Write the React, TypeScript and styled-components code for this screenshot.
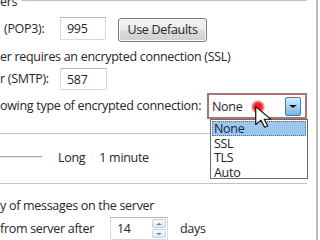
import styled, { createGlobalStyle } from 'styled-components';

const GlobalStyle = createGlobalStyle`
  html, body {
    margin: 0;
    padding: 0;
    background: #ffffff;
    overflow: hidden;
  }
`;

const Frame = styled.div`
  position: relative;
  width: 320px;
  height: 240px;
  overflow: hidden;
  background: #ffffff;
  font-family: 'Open Sans', 'Noto Sans', sans-serif;
  font-size: 12.5px;
  letter-spacing: -0.3px;
  color: #262626;
`;

const Panel = styled.div`
  display: flex;
  flex-direction: column;
  box-sizing: border-box;
  width: 318px;
  height: 240px;
  padding-right: 9px;
  border-right: 2px solid #bcbcbc;
`;

const GroupHeader = styled.div`
  display: flex;
  align-items: center;
  gap: 4px;
  height: 18px;
  margin-top: -8px;
`;

const Rule = styled.div<{ $width?: number }>`
  flex: ${(p) => (p.$width ? `0 0 ${p.$width}px` : '1')};
  height: 0;
  border-top: 1px solid #c2c2c2;
  border-bottom: 1px solid #fdfdfd;
`;

const Row = styled.div<{ $top: number; $height: number; $indent?: number }>`
  display: flex;
  align-items: center;
  margin-top: ${(p) => p.$top}px;
  height: ${(p) => p.$height}px;
  padding-left: ${(p) => p.$indent ?? 0}px;
  white-space: nowrap;
`;

const Label = styled.span<{ $width?: number }>`
  flex: 0 0 ${(p) => (p.$width ? `${p.$width}px` : 'auto')};
  line-height: 16px;
`;

const Spaced = styled.span<{ $gap: number }>`
  margin-left: ${(p) => p.$gap}px;
  line-height: 16px;
`;

const TextBox = styled.div<{ $width: number; $height: number }>`
  display: flex;
  align-items: center;
  box-sizing: border-box;
  width: ${(p) => p.$width}px;
  height: ${(p) => p.$height}px;
  padding-left: 6px;
  background: #ffffff;
  border: 1px solid #d6dbe1;
  border-top-color: #b3b6bb;
`;

const PushButton = styled.div`
  display: flex;
  align-items: center;
  justify-content: center;
  box-sizing: border-box;
  width: 89px;
  height: 24px;
  margin-left: 12px;
  margin-top: 2px;
  border: 1px solid #7a7a7a;
  border-radius: 3px;
  background: linear-gradient(#f3f3f3 0%, #ebebeb 48%, #dcdcdc 52%, #cfcfcf 100%);
  box-shadow: inset 0 0 0 1px #fafafa;
`;

const Combo = styled.div`
  display: flex;
  align-items: center;
  justify-content: space-between;
  box-sizing: border-box;
  width: 102px;
  height: 26px;
  padding: 0 4px 0 3px;
  background: #ffffff;
  border: 2px solid #a27878;
`;

const DropButton = styled.div`
  display: flex;
  align-items: center;
  justify-content: center;
  box-sizing: border-box;
  width: 16px;
  height: 19px;
  border: 1px solid #3f7db0;
  border-radius: 2px;
  background: linear-gradient(#d6edfc 0%, #a9d4f3 50%, #7ab6e5 100%);
`;

const Triangle = styled.span<{ $up?: boolean; $color: string; $size: number }>`
  width: 0;
  height: 0;
  border-left: ${(p) => p.$size}px solid transparent;
  border-right: ${(p) => p.$size}px solid transparent;
  ${(p) =>
    p.$up
      ? `border-bottom: ${p.$size - 1}px solid ${p.$color};`
      : `border-top: ${p.$size - 1}px solid ${p.$color};`}
`;

const Track = styled.div`
  flex: 0 0 42px;
  height: 0;
  margin-top: -3px;
  border-top: 1px solid #a9a9a9;
  border-bottom: 1px solid #e6e6e6;
`;

const Separator = styled.div<{ $top: number }>`
  margin-top: ${(p) => p.$top}px;
  height: 0;
  border-top: 1px solid #c2c2c2;
  border-bottom: 1px solid #fdfdfd;
`;

const TextLine = styled.div<{ $top: number }>`
  margin-top: ${(p) => p.$top}px;
  height: 16px;
  line-height: 16px;
  white-space: nowrap;
`;

const SpinBox = styled(TextBox)`
  justify-content: space-between;
  padding-right: 1px;
`;

const SpinButtons = styled.div`
  display: flex;
  flex-direction: column;
  gap: 1px;
  align-self: stretch;
  padding: 1px 0;
`;

const SpinButton = styled.div`
  display: flex;
  align-items: center;
  justify-content: center;
  flex: 1;
  width: 14px;
  box-sizing: border-box;
  border: 1px solid #c8d2de;
  border-radius: 2px;
  background: linear-gradient(#f6f8fb, #e2e8ef);
`;

const DropList = styled.div`
  position: absolute;
  left: 210px;
  top: 119px;
  box-sizing: border-box;
  width: 98px;
  height: 60px;
  padding: 1px;
  background: #ffffff;
  border: 1px solid #6a6a6a;
  display: flex;
  flex-direction: column;
`;

const ListItem = styled.div<{ $selected?: boolean }>`
  box-sizing: border-box;
  height: 14.5px;
  line-height: 14px;
  padding-left: 1px;
  color: ${(p) => (p.$selected ? '#14243f' : '#222222')};
  background: ${(p) => (p.$selected ? '#9cc8f0' : 'transparent')};
  border: 1px ${(p) => (p.$selected ? 'dotted #5a6b80' : 'solid transparent')};
`;

const ClickDot = styled.div`
  position: absolute;
  left: 251px;
  top: 100px;
  width: 14px;
  height: 14px;
  border-radius: 50%;
  background: radial-gradient(circle, #ff1a1a 0%, #f0282c 40%, rgba(240, 60, 60, 0.35) 65%, rgba(255, 255, 255, 0) 72%);
`;

const Pointer = styled.svg`
  position: absolute;
  left: 255px;
  top: 106px;
`;

const options = ['None', 'SSL', 'TLS', 'Auto'];

export default function App() {
  return (
    <Frame>
      <GlobalStyle />
      <Panel>
        <GroupHeader>
          <span>ers</span>
          <Rule />
        </GroupHeader>

        <Row $top={7} $height={23} $indent={4}>
          <Label $width={56}>(POP3):</Label>
          <TextBox $width={46} $height={23}>995</TextBox>
          <PushButton>Use Defaults</PushButton>
        </Row>

        <TextLine $top={9}>er requires an encrypted connection (SSL)</TextLine>

        <Row $top={3} $height={22}>
          <Label $width={60}>r (SMTP):</Label>
          <TextBox $width={47} $height={22}>587</TextBox>
        </Row>

        <Row $top={3} $height={26}>
          <Label $width={207}>owing type of encrypted connection:</Label>
          <Combo>
            <span>None</span>
            <DropButton>
              <Triangle $color="#111111" $size={4} />
            </DropButton>
          </Combo>
        </Row>

        <Separator $top={14} />

        <Row $top={14} $height={18}>
          <Track />
          <Spaced $gap={16}>Long</Spaced>
          <Spaced $gap={14}>1 minute</Spaced>
        </Row>

        <Separator $top={16} />

        <TextLine $top={13}>y of messages on the server</TextLine>

        <Row $top={3} $height={23}>
          <Label $width={110}>from server after</Label>
          <SpinBox $width={58} $height={23}>
            <span>14</span>
            <SpinButtons>
              <SpinButton>
                <Triangle $up $color="#4f7fae" $size={3} />
              </SpinButton>
              <SpinButton>
                <Triangle $color="#4f7fae" $size={3} />
              </SpinButton>
            </SpinButtons>
          </SpinBox>
          <Spaced $gap={12}>days</Spaced>
        </Row>
      </Panel>

      <DropList>
        {options.map((o, i) => (
          <ListItem key={o} $selected={i === 0}>
            {o}
          </ListItem>
        ))}
      </DropList>

      <ClickDot />
      <Pointer width="17" height="22" viewBox="0 0 12 19" preserveAspectRatio="none">
        <path
          d="M0.5 0.5 L0.5 16 L4.2 12.3 L6.8 18.3 L9 17.3 L6.5 11.5 L11.3 11.5 Z"
          fill="#ffffff"
          stroke="#1a1a1a"
          strokeWidth="0.9"
          strokeLinejoin="round"
        />
      </Pointer>
    </Frame>
  );
}
